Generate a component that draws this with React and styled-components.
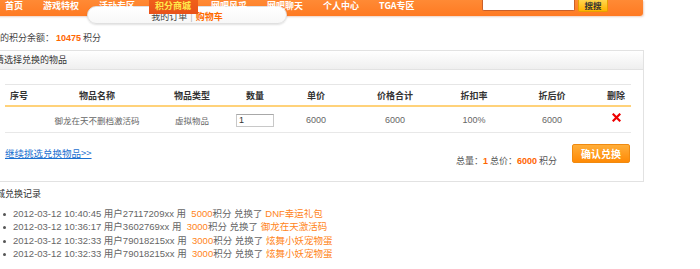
import React from "react";
import styled, { createGlobalStyle } from "styled-components";

const Global = createGlobalStyle`
  html, body { margin: 0; padding: 0; background: #fff; overflow: hidden; }
  body { font-family: "Liberation Sans", "Noto Sans CJK SC", sans-serif; font-size: 9px; color: #555; }
`;

const Page = styled.div`
  margin-left: -20px;
  width: 720px;
`;

const Header = styled.div`
  position: relative;
  height: 16px;
`;

const NavBar = styled.div`
  width: 663px;
  height: 16px;
  display: flex;
  align-items: flex-start;
  background: linear-gradient(#ff8a35, #ff7a22);
  border-bottom-right-radius: 3px;
  box-shadow: 1px 1px 2px rgba(200, 120, 80, 0.35);
  padding-left: 15px;
  padding-right: 35px;
  box-sizing: border-box;
`;

const NavList = styled.div`
  display: flex;
  align-items: flex-start;
`;

const NavItem = styled.div`
  position: relative;
  z-index: 2;
  padding: 0 ${(p) => (p.$active ? "6.5px" : "10px")};
  margin: 0 ${(p) => (p.$active ? "3.5px" : "0")};
  height: ${(p) => (p.$active ? "14px" : "11px")};
  line-height: 11px;
  font-family: "Noto Sans CJK SC", sans-serif;
  font-size: 9px;
  font-weight: bold;
  color: ${(p) => (p.$active ? "#ffe94a" : "#fff")};
  background: ${(p) => (p.$active ? "linear-gradient(#f0601a, #e8521a)" : "transparent")};
  white-space: nowrap;
`;

const SearchBox = styled.div`
  margin-left: auto;
  display: flex;
  gap: 3px;
`;

const SearchInput = styled.div`
  width: 91px;
  height: 10px;
  background: #fff;
  border: 1px solid #c9602a;
  border-top: none;
  border-radius: 0 0 2px 2px;
`;

const SearchButton = styled.div`
  width: 28px;
  height: 11px;
  line-height: 10px;
  text-align: center;
  background: linear-gradient(#ffd650, #ffb300);
  border: 1px solid #e8a000;
  border-top: none;
  border-radius: 0 0 2px 2px;
  font-family: "Noto Sans CJK SC", sans-serif;
  font-size: 8.5px;
  font-weight: bold;
  color: #333;
`;

const SubNav = styled.div`
  position: absolute;
  z-index: 1;
  left: 107px;
  top: 6px;
  width: 200px;
  height: 18px;
  border: 1px solid #e0e0e0;
  border-radius: 9px;
  background: linear-gradient(#ffffff, #f7f7f7);
  box-shadow: 0 1px 2px rgba(0, 0, 0, 0.12);
  display: flex;
  align-items: center;
  justify-content: center;
  padding-top: 3px;
  box-sizing: border-box;
  font-family: "Noto Sans CJK SC", sans-serif;
  font-size: 9px;
  color: #444;
  gap: 3px;
`;

const SubSep = styled.span`
  color: #aaa;
`;

const SubActive = styled.span`
  color: #ff6a00;
  font-weight: bold;
`;

const Balance = styled.div`
  margin-top: 15px;
  padding-left: 11px;
  height: 14px;
  line-height: 14px;
  font-family: "Noto Sans CJK SC", sans-serif;
  color: #444;
`;

const Orange = styled.span`
  color: ${(p) => (p.$light ? "#ff8420" : "#ff6600")};
  font-weight: ${(p) => (p.$bold ? "bold" : "normal")};
  font-family: "Liberation Sans", "Noto Sans CJK SC", sans-serif;
`;

const Panel = styled.div`
  margin-top: 5px;
  margin-left: 5px;
  width: 659px;
  border: 1px solid #e2e2e2;
  box-sizing: border-box;
  background: #fff;
`;

const PanelHead = styled.div`
  height: 18px;
  line-height: 18px;
  padding-left: 9px;
  background: linear-gradient(#ffffff, #efefef);
  border-bottom: 1px solid #e2e2e2;
  font-family: "Noto Sans CJK SC", sans-serif;
  color: #333;
`;

const Table = styled.div`
  margin: 14px 0 0 19px;
  width: 626px;
  border-top: 1px solid #e6e6e6;
`;

const COLS = "28px 128px 62px 64px 58px 100px 58px 98px 30px";

const HeadRow = styled.div`
  display: grid;
  grid-template-columns: ${COLS};
  height: 20px;
  align-items: center;
  border-bottom: 2px solid #ffd27a;
  font-family: "Noto Sans CJK SC", sans-serif;
  font-weight: bold;
  color: #333;
  text-align: center;
`;

const Row = styled.div`
  display: grid;
  grid-template-columns: ${COLS};
  height: 25px;
  align-items: center;
  border-bottom: 1px solid #e8e8e8;
  color: #666;
  text-align: center;
`;

const Cell = styled.div`
  font-family: ${(p) => (p.$cjk ? '"Noto Sans CJK SC", sans-serif' : '"Liberation Sans", sans-serif')};
  font-size: ${(p) => (p.$cjk ? "8.5px" : "9px")};
  display: flex;
  justify-content: center;
  white-space: nowrap;
`;

const QtyInput = styled.div`
  width: 34px;
  height: 11px;
  border: 1px solid #c8c8c8;
  border-top-color: #a8a8a8;
  text-align: left;
  padding-left: 2px;
  line-height: 11px;
  color: #333;
  font-family: "Liberation Sans", sans-serif;
  background: #fff;
  margin-top: 1px;
`;

const Footer = styled.div`
  display: flex;
  align-items: flex-start;
  padding: 11px 13px 14px 19px;
`;

const MoreLink = styled.a`
  margin-top: 3px;
  line-height: 12px;
  font-family: "Noto Sans CJK SC", sans-serif;
  font-size: 9.5px;
  color: #1a6fd0;
  text-decoration: underline;
`;

const Summary = styled.div`
  margin-left: auto;
  margin-top: 11px;
  line-height: 12px;
  font-family: "Noto Sans CJK SC", sans-serif;
  color: #555;
`;

const ConfirmButton = styled.div`
  margin-left: 15px;
  width: 56px;
  height: 17px;
  line-height: 17px;
  text-align: center;
  border: 1px solid #f08a10;
  border-radius: 2px;
  background: linear-gradient(#ffae3a, #ff8a05);
  color: #fff;
  font-family: "Noto Sans CJK SC", sans-serif;
  font-size: 10px;
  font-weight: bold;
`;

const Records = styled.div`
  margin-top: 5px;
  padding-left: 7px;
`;

const RecordsTitle = styled.div`
  line-height: 14px;
  font-family: "Noto Sans CJK SC", sans-serif;
  color: #333;
`;

const RecordList = styled.ul`
  list-style: none;
  margin: 5.5px 0 0 0;
  padding: 0 0 0 16px;
`;

const RecordItem = styled.li`
  position: relative;
  height: 13.5px;
  line-height: 13.5px;
  padding-left: 10px;
  color: #666;
  font-size: 9.5px;
  font-family: "Liberation Sans", "Noto Sans CJK SC", sans-serif;
  white-space: nowrap;
  &::before {
    content: "";
    position: absolute;
    left: 0;
    top: 6px;
    width: 3px;
    height: 3px;
    border-radius: 50%;
    background: #555;
  }
`;

const NextPanel = styled.div`
  margin-top: 9px;
  margin-left: 5px;
  width: 659px;
  height: 6px;
  border-top: 3px solid #ececec;
`;

const DeleteIcon = () => (
  <svg width="9" height="9" viewBox="0 0 9 9" style={{ marginTop: -4 }}>
    <path d="M1.5 1.5 L7.5 7.5 M7.5 1.5 L1.5 7.5" stroke="#ee0000" strokeWidth="2.2" strokeLinecap="square" />
  </svg>
);

const navItems = ["首页", "游戏特权", "活动专区", "积分商城", "网吧风采", "网吧聊天", "个人中心", "TGA专区"];

const records = [
  { t: "2012-03-12 10:40:45 用户27117209xx 用", pts: "5000", item: "DNF幸运礼包" },
  { t: "2012-03-12 10:36:17 用户3602769xx 用", pts: "3000", item: "御龙在天激活码" },
  { t: "2012-03-12 10:32:33 用户79018215xx 用", pts: "3000", item: "炫舞小妖宠物蛋" },
  { t: "2012-03-12 10:32:33 用户79018215xx 用", pts: "3000", item: "炫舞小妖宠物蛋" },
];

export default function App() {
  return (
    <>
      <Global />
      <Page>
        <Header>
          <NavBar>
            <NavList>
              {navItems.map((n) => (
                <NavItem key={n} $active={n === "积分商城"}>{n}</NavItem>
              ))}
            </NavList>
            <SearchBox>
              <SearchInput />
              <SearchButton>搜搜</SearchButton>
            </SearchBox>
          </NavBar>
          <SubNav>
            <span>我的订单</span>
            <SubSep>|</SubSep>
            <SubActive>购物车</SubActive>
          </SubNav>
        </Header>
        <Balance>
          我的积分余额：&nbsp;<Orange $bold>10475</Orange> 积分
        </Balance>
        <Panel>
          <PanelHead>请选择兑换的物品</PanelHead>
          <Table>
            <HeadRow>
              <div>序号</div>
              <div>物品名称</div>
              <div>物品类型</div>
              <div>数量</div>
              <div>单价</div>
              <div>价格合计</div>
              <div>折扣率</div>
              <div>折后价</div>
              <div>删除</div>
            </HeadRow>
            <Row>
              <Cell></Cell>
              <Cell $cjk>御龙在天不删档激活码</Cell>
              <Cell $cjk>虚拟物品</Cell>
              <Cell><QtyInput>1</QtyInput></Cell>
              <Cell>6000</Cell>
              <Cell>6000</Cell>
              <Cell>100%</Cell>
              <Cell>6000</Cell>
              <Cell><DeleteIcon /></Cell>
            </Row>
          </Table>
          <Footer>
            <MoreLink href="#">继续挑选兑换物品&gt;&gt;</MoreLink>
            <Summary>
              总量：<Orange $bold>1</Orange> 总价：<Orange $bold>6000</Orange> 积分
            </Summary>
            <ConfirmButton>确认兑换</ConfirmButton>
          </Footer>
        </Panel>
        <Records>
          <RecordsTitle>商城兑换记录</RecordsTitle>
          <RecordList>
            {records.map((r, i) => (
              <RecordItem key={i}>
                {r.t}&nbsp;&nbsp;<Orange $light>{r.pts}</Orange>积分&nbsp;兑换了&nbsp;<Orange $light>{r.item}</Orange>
              </RecordItem>
            ))}
          </RecordList>
        </Records>
        <NextPanel />
      </Page>
    </>
  );
}
